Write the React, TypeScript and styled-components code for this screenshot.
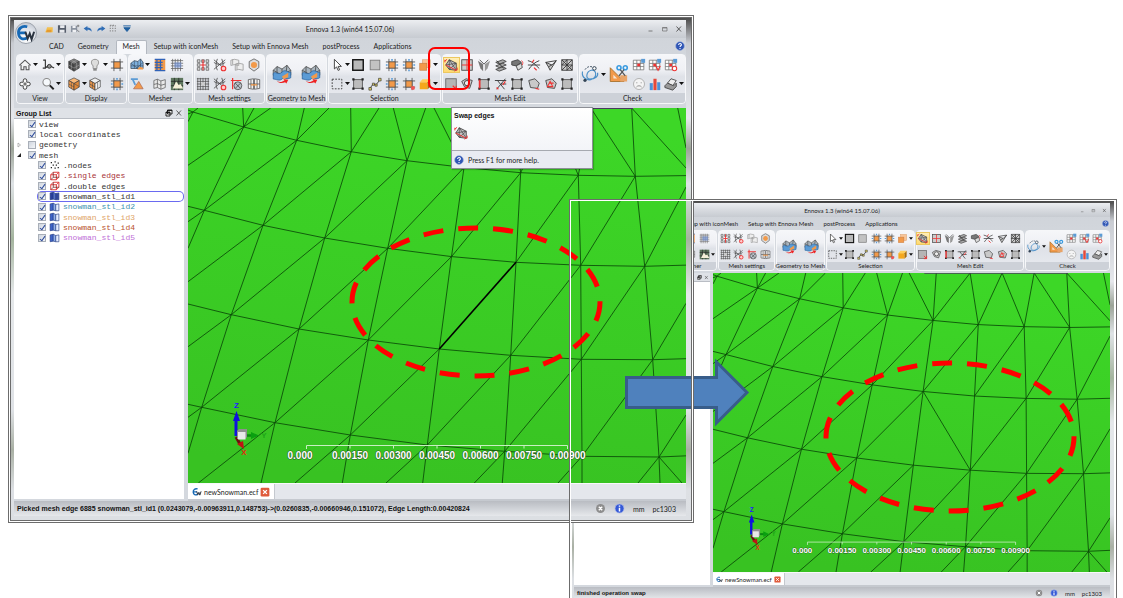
import React from 'react';
import styled, { createGlobalStyle, css, ThemeProvider } from 'styled-components';

interface Metrics {
  font: number;
  mono: number;
  titleH: number;
  tabsH: number;
  tabPad: number;
  tabsLeft: number;
  groupH: number;
  labelH: number;
  ribbonGap: number;
  icon: number;
  bigIcon: number;
  drop: number;
  col: number;
  wideCol: number;
  bigCol: number;
  panelW: number;
  splitter: number;
  headerH: number;
  viewH: number;
  docH: number;
  docPad: number;
  statusH: number;
  statusPad: number;
  orb: number;
  glass: string;
}

const full: Metrics = {
  font: 7, mono: 8, titleH: 18, tabsH: 16, tabPad: 7, tabsLeft: 28, groupH: 50, labelH: 10,
  ribbonGap: 4, icon: 14, bigIcon: 20, drop: 5, col: 16, wideCol: 21, bigCol: 26, panelW: 170, splitter: 4,
  headerH: 11, viewH: 375, docH: 18, docPad: 4, statusH: 15, statusPad: 10, orb: 22, glass: '2px 5px 4px 3px',
};

const compact: Metrics = {
  font: 6, mono: 6, titleH: 14, tabsH: 13, tabPad: 5, tabsLeft: 20, groupH: 41, labelH: 8,
  ribbonGap: 2, icon: 11, bigIcon: 15, drop: 4, col: 13, wideCol: 17, bigCol: 20, panelW: 136, splitter: 3,
  headerH: 9, viewH: 299, docH: 15, docPad: 3, statusH: 12, statusPad: 8, orb: 18, glass: '2px 4px 4px 2px',
};

declare module 'styled-components' {
  export interface DefaultTheme extends Metrics {}
}

const Global = createGlobalStyle`
  * { box-sizing: border-box; }
  body { margin: 0; background: #fff; overflow: hidden; font-family: Lato, "Liberation Sans", sans-serif; color: #1c1c1c; }
  button { font: inherit; color: inherit; padding: 0; margin: 0; border: 0; background: none; }
  svg { display: block; }
`;

/* ---------- stage ---------- */

const Stage = styled.main`
  position: relative;
  width: 100%;
  height: 100vh;
  overflow: hidden;
  background: #fff;
`;

const WindowBox = styled.section<{ $x: number; $y: number; $w: number }>`
  position: absolute;
  left: ${p => p.$x}px;
  top: ${p => p.$y}px;
  width: ${p => p.$w}px;
  padding: ${p => p.theme.glass};
  font-size: ${p => p.theme.font}px;
  line-height: ${p => p.theme.font + 3}px;
  white-space: nowrap;
  background:
    linear-gradient(90deg, #44444480, #3330 30%, #2228 60%, #5558) top / 100% 3px no-repeat,
    linear-gradient(180deg, #4a4a4a, #c9ccd2 5%, #e6e8ec 20%, #9ca498 26%, #dfe3e6 33%, #a4b49e 44%, #e5e8ea 55%, #dfe2e6 78%, #a9b0a4 86%, #dde0e4 94%, #dcdfe3);
`;

const Frame = styled.div<{ $x: number; $y: number; $w: number; $h: number; $double?: boolean }>`
  position: absolute;
  left: ${p => p.$x}px;
  top: ${p => p.$y}px;
  width: ${p => p.$w}px;
  height: ${p => p.$h}px;
  border: 1px solid #6c6c6c;
  box-shadow: inset 0 0 0 1px #fff ${p => (p.$double ? ', inset 0 0 0 2px #6c6c6c' : '')};
  pointer-events: none;
`;

const Highlight = styled.div`
  position: absolute;
  left: 428px;
  top: 47px;
  width: 42px;
  height: 43px;
  border: 2px solid #f00;
  border-radius: 7px;
`;

const Annotations = styled.svg`
  position: absolute;
  left: 0;
  top: 0;
  pointer-events: none;
`;

/* ---------- window chrome ---------- */

const Client = styled.div`
  display: flex;
  flex-direction: column;
  background: #d4d8de;
`;

const Chrome = styled.header`
  position: relative;
  background: linear-gradient(180deg, #dfe2e7, #c6cad0 16%, #d0d4da 40%, #d2d6dc);
`;

const TitleBar = styled.div`
  display: grid;
  grid-template-columns: 1fr auto 1fr;
  align-items: center;
  height: ${p => p.theme.titleH}px;
  background: linear-gradient(180deg, #eceef1, #d9dce1 45%, #c7cbd1);
`;

const QuickBar = styled.div`
  display: flex;
  align-items: center;
  padding-left: ${p => p.theme.tabsLeft}px;
  button { width: ${p => p.theme.col - 3}px; display: grid; place-items: center; }
  svg { width: ${p => p.theme.icon - 4}px; height: ${p => p.theme.icon - 4}px; }
`;

const Title = styled.h1`
  margin: 0;
  font-size: inherit;
  font-weight: 400;
`;

const WindowButtons = styled.div`
  display: flex;
  justify-content: flex-end;
  button { width: ${p => p.theme.col - 2}px; display: grid; place-items: center; }
  svg { width: ${p => p.theme.icon - 6}px; height: ${p => p.theme.icon - 6}px; }
`;

const Orb = styled.button`
  && {
    position: absolute;
    left: 1px;
    top: 2px;
    width: ${p => p.theme.orb}px;
    height: ${p => p.theme.orb}px;
    border: 1px solid #9ea4ad;
    border-radius: 50%;
    background: radial-gradient(circle at 50% 80%, #fff, #dfe3ea 55%, #b5bbc6);
    display: grid;
    place-items: center;
  }
  svg { width: ${p => p.theme.orb - 2}px; height: ${p => p.theme.orb - 2}px; }
`;

const Tabs = styled.nav`
  display: flex;
  align-items: stretch;
  height: ${p => p.theme.tabsH}px;
  padding-left: ${p => p.theme.tabsLeft}px;
  > :last-child { margin-left: auto; }
`;

const Tab = styled.button<{ $on?: boolean }>`
  && { padding: 0 ${p => p.theme.tabPad}px; }
  ${p => p.$on && css`
    && {
      margin-top: 2px;
      border: 1px solid #b3b8c0;
      border-bottom: 0;
      border-radius: 2px 2px 0 0;
      padding: 0 ${p.theme.tabPad - 1}px 3px;
      background: #f6f7fa;
    }
  `}
`;

const HelpButton = styled.button`
  && { padding-right: 1px; display: grid; place-items: center; }
  svg { width: ${p => p.theme.icon - 4}px; height: ${p => p.theme.icon - 4}px; }
`;

/* ---------- ribbon ---------- */

const Ribbon = styled.div`
  display: flex;
  gap: 1px;
  padding: 0 0 ${p => p.theme.ribbonGap}px 2px;
`;

const GroupBox = styled.section<{ $grow: number }>`
  flex: ${p => p.$grow} 1 0;
  min-width: 0;
  height: ${p => p.theme.groupH}px;
  display: flex;
  flex-direction: column;
  border: 1px solid #f6f7f9;
  border-radius: 4px;
  background: linear-gradient(180deg, #f5f6f9, #f0f1f5 30%, #dfe2e8 45%, #e9ebf0);
`;

const GroupLabel = styled.h2`
  display: flex;
  justify-content: center;
  margin: 0;
  height: ${p => p.theme.labelH}px;
  line-height: ${p => p.theme.labelH}px;
  font-size: inherit;
  font-weight: 400;
  border-radius: 0 0 3px 3px;
  background: #cdd1d8;
`;

const Tools = styled.div<{ $cols: string }>`
  flex: 1;
  display: grid;
  grid-template-rows: 1fr 1fr;
  grid-template-columns: ${p =>
    p.$cols.split('').map(c => (c === 'w' ? p.theme.wideCol : c === 'b' ? p.theme.bigCol : p.theme.col) + 'px').join(' ')};
  justify-content: space-evenly;
  align-items: center;
`;

const Tool = styled.button<{ $big?: boolean; $on?: boolean }>`
  && {
    display: flex;
    align-items: center;
    gap: 1px;
    ${p => p.$big && css`grid-row: 1 / span 2; justify-content: center;`}
    ${p => p.$on && css`background: linear-gradient(#ffefb8, #ffd970); box-shadow: 0 0 0 1px #ecc860; width: ${p.theme.icon + 1}px;`}
  }
  svg.glyph {
    flex: none;
    width: ${p => (p.$big ? p.theme.bigIcon : p.theme.icon)}px;
    height: ${p => (p.$big ? p.theme.bigIcon : p.theme.icon)}px;
  }
  svg.drop { flex: none; width: ${p => p.theme.drop}px; height: 3px; }
`;

/* ---------- body ---------- */

const Body = styled.div`
  display: flex;
`;

const SidePanel = styled.aside`
  width: ${p => p.theme.panelW}px;
  display: flex;
  flex-direction: column;
  padding-bottom: 2px;
`;

const PanelHeader = styled.div`
  display: flex;
  align-items: center;
  gap: 2px;
  height: ${p => p.theme.headerH}px;
  padding: 0 1px 0 2px;
  background: #dfe2e7;
  border-bottom: 1px solid #b9bdc4;
  h2 { margin: 0 auto 0 0; font: 700 ${p => p.theme.font}px "Liberation Sans", sans-serif; color: #111; }
  svg { width: ${p => p.theme.icon - 6}px; height: ${p => p.theme.icon - 6}px; }
`;

const PanelBody = styled.div`
  flex: 1;
  background: #fff;
`;

const Tree = styled.ul`
  display: grid;
  grid-template-rows: repeat(12, 1fr);
  height: 124px;
  margin: 0;
  padding: 0;
  list-style: none;
  font: ${p => p.theme.mono}px "Liberation Mono", monospace;
`;

const Row = styled.li<{ $level: number; $color?: string; $on?: boolean }>`
  display: flex;
  align-items: center;
  margin-left: ${p => (p.$level ? 23 : 2)}px;
  padding-left: ${p => (p.$level ? 1 : 0)}px;
  color: ${p => p.$color || '#333'};
  ${p => p.$on && css`box-shadow: inset 0 0 0 1px #6a6af0; border-radius: 5px;`}
  label { display: flex; align-items: center; gap: 3px; }
  label svg { width: 11px; height: 10px; }
`;

const Twist = styled.span`
  width: 12px;
  height: 6px;
  svg { width: 6px; height: 6px; }
`;

const Check = styled.input`
  appearance: none;
  position: relative;
  width: 8px;
  height: 8px;
  margin: 0;
  border: 1px solid #a9afb8;
  background: linear-gradient(135deg, #cfd5de, #f4f6f8);
  &:checked::after {
    content: '';
    position: absolute;
    left: 2px;
    top: 0;
    width: 2px;
    height: 5px;
    border: solid #2c4a9a;
    border-width: 0 1px 1px 0;
    transform: rotate(35deg);
  }
`;

const Content = styled.div`
  flex: 1;
  min-width: 0;
  margin-left: ${p => p.theme.splitter}px;
  background: #e4e7ec;
`;

const View = styled.svg`
  && { width: 100%; height: ${p => p.theme.viewH}px; }
`;

const DocBar = styled.div`
  display: flex;
  height: ${p => p.theme.docH}px;
  border-top: 1px solid #f8f9fa;
  border-bottom: 2px solid #c5c9cf;
`;

const DocTab = styled.div`
  display: flex;
  align-items: center;
  gap: 2px;
  padding: 0 ${p => p.theme.docPad}px;
  background: #fff;
  border-right: 1px solid #c4c8ce;
  svg { width: ${p => p.theme.icon - 4}px; height: ${p => p.theme.icon - 4}px; }
`;

const StatusBar = styled.footer`
  display: flex;
  align-items: center;
  gap: ${p => p.theme.font + 1}px;
  height: ${p => p.theme.statusH}px;
  padding: 0 ${p => p.theme.statusPad}px 0 3px;
  background: linear-gradient(180deg, #b9bcc2, #cfd2d7 50%, #e6e8eb);
  strong { margin-right: auto; font: 700 ${p => p.theme.font}px "Liberation Sans", sans-serif; color: #111; }
  svg { width: ${p => p.theme.icon - 3}px; height: ${p => p.theme.icon - 3}px; }
`;

const Tip = styled.div`
  position: absolute;
  left: 440px;
  top: 89px;
  width: 142px;
  height: 62px;
  display: flex;
  flex-direction: column;
  border: 1px solid #8c8f96;
  background: linear-gradient(180deg, #fff, #eef0f5);
  box-shadow: 1px 1px 1px #0003;
  strong { padding: 3px 2px; font: 700 7px/10px "Liberation Sans", sans-serif; color: #111; }
  > svg { width: 14px; height: 14px; margin: 2px 0 0 2px; }
  p {
    display: flex;
    align-items: center;
    gap: 4px;
    height: 18px;
    margin: auto 0 0;
    padding-left: 2px;
    border-top: 1px solid #a6a9b0;
    background: #e9ebf2;
  }
  p svg { width: 10px; height: 10px; }
`;

/* ---------- icons ---------- */

const K = '#444';
const O = '#f29a4a';
const B = '#5b9bd5';
const R = '#e33';

const hash = (fill: string, line: string) => (
  <>
    <path d="M1 4.5h14M1 11.5h14M4.5 1v14M11.5 1v14" stroke={line} />
    <rect x="4.5" y="4.5" width="7" height="7" fill={fill} stroke={K} strokeWidth=".7" />
  </>
);
const cube = (a: string, b: string, c: string) => (
  <>
    <path d="M8 1l6 3-6 3.500L2 4z" fill={a} stroke={K} strokeWidth=".8" />
    <path d="M2 4l6 3.500V15l-6-3.500z" fill={b} stroke={K} strokeWidth=".8" />
    <path d="M14 4L8 7.500V15l6-3.500z" fill={c} stroke={K} strokeWidth=".8" />
  </>
);
const tiles = (
  <path d="M1.500 2h3v3h-3zM6.500 2h3v3h-3zM11.500 2h3v3h-3zM1.500 6.500h3v3h-3zM11.500 6.500h3v3h-3zM1.500 11h3v3h-3zM6.500 11h3v3h-3zM11.500 11h3v3h-3z" fill="#ddd" stroke="#555" strokeWidth=".8" />
);
const smallGrid = (
  <>
    <path d="M1.500 2.500h12v11h-12zM1.500 6.200h12M1.500 9.800h12M5.500 2.500v11M9.500 2.500v11" fill="#fff" stroke="#777" strokeWidth=".9" />
    <rect x="6" y="6.500" width="3.200" height="3" fill={R} />
    <rect x="10.500" y="1" width="4.500" height="4.500" fill={B} />
  </>
);
const geoMesh = (
  <>
    <path d="M1 5l3-3 4 2 4-3 3 4v4l-4 2-3-2-4 2-3-2z" fill="#a9b4bd" stroke={K} strokeWidth=".6" />
    <path d="M8 4v5M4 2v6M12 1l-1 8M1 5l7 4 7-4" stroke={K} strokeWidth=".6" fill="none" />
    <path d="M1 7.500c2-2 4 2 7-1s5 1 7 0v4.500c-3 2-5-1-7 1s-5 0-7 0z" fill={B} stroke="#2a6099" strokeWidth=".6" />
    <path d="M8 10l5-3v3.500l-4 1.500z" fill={O} />
    <path d="M4 13.500c2 1.500 4 1 6-.5l-1-1 4 .5-1.500 3-1-1c-2 1-5 1-6.500-1z" fill="#e22" />
  </>
);
const tiltQuad = (
  <path d="M2 4l7-2 5 5-2 6-8-1z" fill="#c9c9c9" stroke={K} />
);
const corners = (
  <>
    <rect x="3" y="3" width="10" height="10" fill="#bcbcbc" stroke="#555" />
    <path d="M1.500 1.500h2.500v2.500h-2.500zM12 1.500h2.500v2.500H12zM1.500 12h2.500v2.500h-2.500zM12 12h2.500v2.500H12z" fill="#222" />
  </>
);

const glyphs: Record<string, React.ReactNode> = {
  home: <path d="M1.500 8.500L8 2.500l6.500 6M3.500 8v5.500h3.200V10h2.600v3.500h3.200V8" fill="#f4f4f4" stroke="#555" strokeWidth="1.200" />,
  axes: <><path d="M2.500 2.500h2.500v9H2M5 11l4-2M11 9.500l4 2" fill="none" stroke="#333" strokeWidth="1.300" /><circle cx="9.500" cy="9.500" r="2.200" fill="#999" stroke="#222" /></>,
  pan: <path d="M6 6V3.500C6 1.500 10 1.500 10 3.500V6h2.500c2 0 2 4 0 4H10v2.500c0 2-4 2-4 0V10H3.500c-2 0-2-4 0-4zM6 8h4M8 6v4" fill="#fafafa" stroke="#444" strokeWidth="1.100" />,
  zoom: <><circle cx="6.500" cy="6" r="4.300" fill="#f6f9fc" stroke="#888" strokeWidth="1.200" /><path d="M10 9.500l4.500 4.500" stroke="#222" strokeWidth="2.200" /></>,
  cubeDark: <>{cube('#777', '#444', '#5a5a5a')}<path d="M5 2.500l6 3.200M11 2.500L5 5.700M2 8l6 3.500L14 8M5 5.700V13M11 5.700V13" stroke="#aaa" strokeWidth=".6" fill="none" /></>,
  bulb: <><path d="M8 1.500c-5 0-5 5-2.200 7.500V12h4.400V9C13 6.500 13 1.500 8 1.500z" fill="#ddd" stroke="#888" /><path d="M6 12.500h4v2H6z" fill="#888" /></>,
  hash: hash(O, '#555'),
  cubeOrange: <>{cube('#f8b878', O, '#e08838')}<path d="M5 5.700v7.500M2 8l6 3.500M8 7.500l6 3.500" stroke={K} strokeWidth=".6" fill="none" /></>,
  cubeOpen: <>{cube('#eee', O, '#f4f4f4')}<path d="M5 5.700V13M2 8l6 3.500M11 6v7" stroke={K} strokeWidth=".7" fill="none" /></>,
  hashBlue: <>{hash(O, '#555')}<path d="M8 1v2M8 13v2M1 8h2M13 8h2" stroke={B} strokeWidth="1.800" /></>,
  meshCar: <><path d="M1 6l4-3 4 1 3-3 3 4v7H1z" fill="#7fb0dc" stroke="#345" strokeWidth=".8" /><path d="M1 9h14M5 3v9M9 4v8M12 1v11M1 6l8 6M15 5l-8 7" stroke="#345" strokeWidth=".6" fill="none" /><path d="M8 13l3-3 4 1v2z" fill={O} /></>,
  blueOrange: <><rect x="2" y="1.500" width="12" height="13" fill={O} /><path d="M2 1.500h12M2 5h9M2 8h9M2 11h9M2 14.500h12M4.500 1.500v13M8.500 1.500v13" stroke="#2f62b8" strokeWidth="1.400" /></>,
  plaid: <><path d="M1 3h14M1 6h14M1 9h14M1 12h14M3 1v14M6 1v14M9 1v14M12 1v14" stroke="#666" strokeWidth=".9" /><rect x="5" y="5" width="8" height="6" fill="#6f92dc99" /></>,
  letterT: <><path d="M1 2.500h8M3 2.500L6 9" stroke={B} strokeWidth="2" /><path d="M4 13.500L10 5l5 8.500z" fill={O} stroke="#a65" strokeWidth=".8" /></>,
  flagMesh: <path d="M1 4l4-1.500 4 2L14 3v9l-5 2-4-2-4 1zM5 2.500V12M9 4.500V14M1 8.500l4-1 4 2 5-1.500" fill="#e8e8e8" stroke="#555" strokeWidth=".8" />,
  terrain: <><rect x="1" y="1" width="14" height="14" fill="#5d765d" /><path d="M1 5h14M1 10h14M5 1v14M10 1v14" stroke="#222" strokeWidth=".8" /><path d="M3 13l4-8 3 4 2-1 3 5z" fill="#f4f0d8" /></>,
  tilesRed: <>{tiles}<path d="M8 2v12M5 8h6" stroke={R} strokeWidth="1.300" /></>,
  netRed: <><path d="M1 2l13 11M1 13L14 2M1 5c4 3 9 3 13 0M5 1c-2 5-2 9 0 13M10 1c2 5 2 9 0 13" stroke="#444" strokeWidth=".9" fill="none" /><circle cx="12" cy="12" r="2.600" fill="#fcc" stroke={R} strokeWidth="1.300" /></>,
  sheets: <path d="M1 2.500l4-1 5 1v6l-5-1-4 1zM6 7l4-1 5 1v7l-5-1-4 1zM3 1.500v6M8 6v7" fill="#eee" stroke="#999" strokeWidth=".9" />,
  orangeHex: <><path d="M8 1l5.500 3v7L8 15l-5.500-4V4z" fill="#ddd" stroke="#666" /><circle cx="8" cy="8" r="3.500" fill={O} /></>,
  tilesDark: <><path d="M1 2h14M1 5h14M1 8h14M1 11h14M1 14h14M2 1v14M5 1v14M8 1v14M11 1v14M14 1v14" stroke="#555" strokeWidth=".9" /><path d="M6 6h4v4H6z" fill="#ccc" /></>,
  redTarget: <><path d="M3 1v13M1 4h12" stroke={R} strokeWidth="1.400" /><circle cx="9" cy="10" r="4.500" fill="#bcc4cc" stroke="#555" /><path d="M6 7l6 6M6 13l6-6" stroke="#333" strokeWidth=".8" /></>,
  doors: <><path d="M1.500 3l6-1v12l-6-1zM8.500 2l6 1v10l-6 1zM1.500 8h13M4.500 3v10M11.500 3v10" fill="#f2f2f2" stroke="#555" strokeWidth=".9" /><path d="M4.500 9h7" stroke={O} strokeWidth="1.500" /></>,
  geo: geoMesh,
  cursor: <path d="M5 1.500v11l2.500-2.300 1.800 4 1.700-.8-1.700-3.800H13z" fill="#fff" stroke="#444" strokeWidth="1.100" />,
  boxBold: <rect x="2" y="2" width="12" height="12" fill="#b9b9b9" stroke="#111" strokeWidth="1.600" />,
  box: <rect x="2.500" y="2.500" width="11" height="11" fill="#c2c2c2" stroke="#777" />,
  hashDot: <>{hash(O, '#555')}<path d="M8 1v2M8 13v2M1 8h2M13 8h2" stroke={B} strokeWidth="1.800" /></>,
  hashDotRed: <>{hash(O, '#555')}<circle cx="12.500" cy="12.500" r="2.300" fill="#e55" /></>,
  stackOrange: <><rect x="5" y="2" width="9" height="9" fill="#f8c598" stroke="#d9a070" strokeWidth=".7" /><rect x="2" y="6" width="8" height="8" fill={O} stroke="#c87a40" strokeWidth=".7" /></>,
  dashBox: <><rect x="2.500" y="2.500" width="11" height="11" fill="none" stroke="#333" strokeDasharray="2 1.500" /></>,
  corners,
  node: <><path d="M2 13l4-5 3 1 5-6" fill="none" stroke="#333" /><path d="M1 12h3v3H1zM5 7h2.500v2.500H5zM8 8h2.500v2.500H8zM12 1.500h3v3h-3z" fill="#d8c860" stroke="#333" strokeWidth=".7" /></>,
  cubeYellow: <><path d="M2 6h9v8H2z" fill="#f5a81c" /><path d="M2 6l3-3.500h9L11 6z" fill="#ffce5a" /><path d="M11 6l3-3.500V11l-3 3z" fill="#a86d0c" /></>,
  swap: <><path d="M2 8l4-6 8 4 0 8-8-1z" fill="#c4c4c4" stroke={K} /><path d="M2 8l12-2M6 2v11M6 13l8-7M6 2l8 12" stroke={K} strokeWidth=".8" /><path d="M1 3.500l2.500-2M1 2v3M12 15l2.500-1.500M15 11v3M2 8l12 6" stroke={R} strokeWidth="1.100" fill="none" /></>,
  split: <><rect x="2" y="2" width="12" height="12" fill="#ccc" stroke={K} /><path d="M2 8h12M8 2v12" stroke={R} strokeWidth="1.100" /></>,
  valley: <><path d="M1 3l6 4v8l-3-3z" fill="#777" /><path d="M15 3L9 7v8l3-3z" fill="#999" /><path d="M3 2l5 5 5-5" fill="none" stroke={K} /></>,
  layers: <><path d="M2 5l8-3 4 2-8 3zM2 9l8-3 4 2-8 3zM2 13l8-3 4 2-8 3z" fill="#aaa" stroke={K} /><path d="M3 3l8 9" stroke="#333" /></>,
  fold: <><path d="M2 4l7-2 4 3-6 4-5-1z" fill="#777" stroke={K} /><path d="M7 9l6-3 1 5-5 3z" fill="#ddd" stroke={K} /><path d="M13 3c2 1 2 3 1 5" stroke={R} fill="none" /></>,
  cross: <><path d="M1 3c5 1 8 4 13 9M2 13c3-5 7-8 12-10M1 8h14" stroke="#333" fill="none" /><path d="M6 5l2-3M8 11l3 3" stroke={R} strokeWidth="1.400" /></>,
  wedge: <path d="M2 5l12-2-7 11-2-4zM2 5l7 3 5-5M5 10l4-2" fill="#ccc" stroke="#333" />,
  triGrid: <path d="M2 2h12v12H2zM8 2v12M2 8h12M2 8l6-6M2 14L14 2M8 14l6-6M2 2l12 12" fill="#ccc" stroke="#333" />,
  boxRed: <><rect x="2" y="2" width="12" height="12" fill="#b5b5b5" stroke="#666" /><path d="M10 10l4 4M14 10v4h-4" stroke={R} strokeWidth="1.300" fill="none" /></>,
  spin: <><path d="M2 5l5-3 7 2-3 9-6-2z" fill="#ccc" stroke={K} /><circle cx="8" cy="7" r="3" fill="#eee" stroke="#333" /></>,
  redSide: <>{corners}<path d="M3 3v10" stroke={R} strokeWidth="2" /></>,
  cross2: <><path d="M1 4h13M3 14L13 2M4 4l8 10M8 8h6" stroke="#333" /><path d="M10 9l3-4M3 12l2 2" stroke={R} strokeWidth="1.400" /></>,
  tilt: <>{tiltQuad}<path d="M10 13l4 1" stroke={R} strokeWidth="1.400" /></>,
  tiltRed: <>{tiltQuad}<path d="M4 11l3-6 3 6zM6 7h5" stroke={R} strokeWidth="1.200" fill="none" /></>,
  path: <><path d="M2 6c-1 5 4 8 8 6s3-8-1-7-5 7-1 7 7-2 6-5" fill="none" stroke="#4a90c8" strokeWidth=".9" /><path d="M4 4.500C6 1.500 9 1.500 11 3" fill="none" stroke="#456" strokeWidth=".8" strokeDasharray="1.500 1" /><circle cx="4" cy="13" r="1.300" fill="#345" /><circle cx="11.500" cy="3.500" r="1.400" fill="#fff" stroke="#345" strokeWidth=".8" /></>,
  measure: <><path d="M1 3v11h11z" fill={O} stroke="#a5702c" strokeWidth=".7" /><path d="M3.500 8.500v3h3z" fill="#f4e6d6" /><rect x="9" y="9" width="5.500" height="5" fill="#e8a468" /><circle cx="8" cy="3" r="1.600" fill="none" stroke="#3a9be0" strokeWidth="1.300" /><circle cx="13" cy="3" r="1.600" fill="none" stroke="#3a9be0" strokeWidth="1.300" /><path d="M9 4.500l4 5M12 4.500l-4 5" stroke="#555" /></>,
  gridPlain: smallGrid,
  gridV: <>{smallGrid}<path d="M9 9l2.500 5L14 9" fill="none" stroke={R} strokeWidth="1.300" /></>,
  gridO: <>{smallGrid}<circle cx="12" cy="12" r="2.500" fill="#fff" stroke={R} strokeWidth="1.200" /></>,
  sad: <><circle cx="8" cy="8" r="6.300" fill="#f4f4f4" stroke="#aaa" /><path d="M5 11.500c1.500-2 4.500-2 6 0M5.500 6v1.200M10.500 6v1.200" fill="none" stroke="#888" /></>,
  bars: <><path d="M2 7h3.500v8H2z" fill="#4a90d8" /><path d="M6.200 2h3.600v13H6.200z" fill="#e4483a" /><path d="M10.500 6H14v9h-3.500z" fill="#4a90d8" /></>,
  scanner: <><path d="M4 7l4-5 6 2-4 6z" fill="#eee" stroke={K} /><path d="M1 10l3-3 7 3 3-3v4l-4 4-9-3z" fill="#999" stroke={K} /></>,
  folder: <><path d="M2 13L5 5h9v8z" fill="#f3c04f" /><path d="M5 9h7v4H3z" fill="#e59a2e" /></>,
  save: <><path d="M1.500 2h13v12h-13z" fill="#555d6b" /><path d="M5 2h7v4.500H5zM4 9h8v5H4z" fill="#e8eaee" /></>,
  saveAs: <><path d="M1.500 3h10v10h-10z" fill="#8b93a0" /><path d="M4 3h5v3.500H4zM4 9h6v4H4z" fill="#f0f1f4" /><path d="M11 9l4 4M13 1v4M11 3h4" stroke="#555" /></>,
  undo: <path d="M1 7l6-4v2.500c4 0 7 2 7 7-2-3-4-3.500-7-3.500v2.500z" fill="#2f6db5" />,
  redo: <path d="M15 7L9 3v2.500c-4 0-7 2-7 7 2-3 4-3.500 7-3.500v2.500z" fill="#2f6db5" />,
  dashes: <path d="M2 2v12M6 2v12M10 2v12M2 2h8" stroke="#777" strokeDasharray="2 2" strokeWidth="1.500" />,
  more: <path d="M2 3h12M3 6h10L8 12z" fill="#1f5f9f" stroke="#1f5f9f" strokeWidth="1.500" />,
  min: <path d="M3 12h8" stroke="#666" strokeWidth="1.600" />,
  max: <path d="M3 5h9v7H3zM3 6h9" fill="none" stroke="#666" strokeWidth="1.300" />,
  close: <path d="M3 3l9 10M12 3L3 13" stroke="#444" strokeWidth="1.700" />,
  float: <path d="M5 2h9v8H5zM2 6h8v8H2zM5 3h9M2 7h8" fill="#eee" stroke="#111" strokeWidth="1.800" />,
  help: <><circle cx="8" cy="8" r="7" fill="#2f55b5" stroke="#9fb2dc" /><path d="M5.800 6.200c0-3 4.700-2.700 4.400 0-.2 1.500-2.200 1.500-2.200 3.300M8 11.200v1.600" fill="none" stroke="#fff" strokeWidth="1.700" /></>,
  info: <><circle cx="8" cy="8" r="6.500" fill="#3559d6" stroke="#aab8ea" /><path d="M8 3.500v2M8 7v5.500" stroke="#fff" strokeWidth="2.200" /></>,
  stop: <><circle cx="8" cy="8" r="6.500" fill="#8d8d8d" /><path d="M5.500 5.500l5 5M10.500 5.500l-5 5" stroke="#fff" strokeWidth="2" /></>,
  tabClose: <><rect x="1" y="1" width="14" height="14" rx="2" fill="#df5b3c" /><path d="M5 5l6 6M11 5l-6 6" stroke="#fff" strokeWidth="2.200" /></>,
  logo: <><path d="M9 3C4.500 2 1.500 4.500 2 8.500s3.500 5 7 3.500M2.500 7.800h5.500" fill="none" stroke="#1769b5" strokeWidth="2.200" /><path d="M7.500 7l1.800 5.500L11 8.500l1.500 4.500L14.500 7" fill="none" stroke="#2b3440" strokeWidth="1.600" /></>,
  nodes: <path d="M2 3h2v2H2zM8 2h2v2H8zM13 4h2v2h-2zM5 7h2v2H5zM10 7h2v2h-2zM2 11h2v2H2zM8 12h2v2H8zM13 11h2v2h-2z" fill="#222" />,
  edges: <><path d="M2 6h9v8H2zM2 6l4-4h9l-4 4M15 2v8l-4 4" fill="none" stroke="#d33" strokeWidth="1.500" /><path d="M6 2v8l-4 4M6 10h9" stroke="#622" strokeWidth="1.200" fill="none" /></>,
  part: <><path d="M1 3l5-1v11l-5 1z" fill="#3d63c9" stroke="#223a80" /><path d="M6 2l4 2v10l-4-1z" fill="#8fb0ee" stroke="#223a80" /><path d="M10 4l5-1v11h-5z" fill="#e6eeff" stroke="#223a80" /></>,
  partDark: <><path d="M1 3l5-1v11l-5 1z" fill="#2a3f9c" stroke="#223a80" /><path d="M6 2l4 2v10l-4-1z" fill="#5570c8" stroke="#223a80" /><path d="M10 4l5-1v11h-5z" fill="#34489c" stroke="#223a80" /></>,
};

const Icon = ({ name }: { name: string }) => (
  <svg className="glyph" viewBox="0 0 16 16" fill="none" aria-hidden="true">{glyphs[name]}</svg>
);

/* ---------- ribbon data ---------- */

interface ToolSpec { icon: string; label: string; drop?: boolean; big?: boolean; on?: boolean }
interface GroupSpec { name: string; grow: number; cols: string; tools: ToolSpec[] }

const t = (icon: string, label: string, flags = ''): ToolSpec => ({
  icon, label, drop: flags.includes('d'), big: flags.includes('b'), on: flags.includes('o'),
});

const groups: GroupSpec[] = [
  { name: 'View', grow: 46, cols: 'ww', tools: [t('home', 'Home', 'd'), t('axes', 'Axes', 'd'), t('pan', 'Pan'), t('zoom', 'Zoom', 'd')] },
  { name: 'Display', grow: 60, cols: 'wwn', tools: [t('cubeDark', 'Shading', 'd'), t('bulb', 'Light', 'd'), t('hash', 'Grid'), t('cubeOrange', 'Solid', 'd'), t('cubeOpen', 'Faces'), t('hashBlue', 'Grid lines')] },
  { name: 'Mesher', grow: 63, cols: 'wnw', tools: [t('meshCar', 'Surface mesh', 'd'), t('blueOrange', 'Volume mesh'), t('plaid', 'Overlay'), t('letterT', 'Triangles'), t('flagMesh', 'Sheet'), t('terrain', 'Terrain', 'd')] },
  { name: 'Mesh settings', grow: 69, cols: 'nnnn', tools: [t('tilesRed', 'Sizes'), t('netRed', 'Remove net'), t('sheets', 'Sheets'), t('orangeHex', 'Hex'), t('tilesDark', 'Density'), t('netRed', 'Net'), t('redTarget', 'Origin'), t('doors', 'Periodic')] },
  { name: 'Geometry to Mesh', grow: 59, cols: 'bb', tools: [t('geo', 'To mesh', 'b'), t('geo', 'To geometry', 'b')] },
  { name: 'Selection', grow: 111, cols: 'wnnnnw', tools: [t('cursor', 'Pick', 'd'), t('boxBold', 'Face and edges'), t('box', 'Face'), t('hashDot', 'Grow'), t('hashDot', 'Connected'), t('stackOrange', 'Layers', 'd'), t('dashBox', 'Box pick', 'd'), t('corners', 'Vertices'), t('node', 'Nodes'), t('hashDot', 'Loop'), t('hashDotRed', 'Deselect'), t('cubeYellow', 'Volume', 'd')] },
  { name: 'Mesh Edit', grow: 134, cols: 'nnnnnnnn', tools: [t('swap', 'Swap edges', 'o'), t('split', 'Split'), t('valley', 'Valley'), t('layers', 'Layers'), t('fold', 'Fold'), t('cross', 'Intersect'), t('wedge', 'Wedge'), t('triGrid', 'Refine'), t('boxRed', 'Move'), t('spin', 'Rotate'), t('redSide', 'Align'), t('cross2', 'Cut'), t('corners', 'Fill'), t('tilt', 'Tilt'), t('tiltRed', 'Mark'), t('corners', 'Corners')] },
  { name: 'Check', grow: 105, cols: 'bbnnw', tools: [t('path', 'Trace', 'bd'), t('measure', 'Measure', 'b'), t('gridPlain', 'Quality'), t('gridV', 'Volume'), t('gridO', 'Orthogonality'), t('sad', 'Problems'), t('bars', 'Histogram'), t('scanner', 'Section', 'd')] },
];

const tabNames = ['CAD', 'Geometry', 'Mesh', 'Setup with iconMesh', 'Setup with Ennova Mesh', 'postProcess', 'Applications'];
const quick = ['folder', 'save', 'saveAs', 'undo', 'redo', 'dashes', 'more'];

interface Node { name: string; level: number; icon?: string; color?: string; on?: boolean; off?: boolean; twist?: 'open' | 'closed' }
const nodes: Node[] = [
  { name: 'view', level: 0 },
  { name: 'local coordinates', level: 0 },
  { name: 'geometry', level: 0, off: true, twist: 'closed' },
  { name: 'mesh', level: 0, twist: 'open' },
  { name: '.nodes', level: 1, icon: 'nodes' },
  { name: '.single edges', level: 1, icon: 'edges', color: '#a83238' },
  { name: '.double edges', level: 1, icon: 'edges' },
  { name: 'snowman_stl_id1', level: 1, icon: 'partDark', on: true },
  { name: 'snowman_stl_id2', level: 1, icon: 'part', color: '#3c93b0' },
  { name: 'snowman_stl_id3', level: 1, icon: 'part', color: '#e0a468' },
  { name: 'snowman_stl_id4', level: 1, icon: 'part', color: '#b8502c' },
  { name: 'snowman_stl_id5', level: 1, icon: 'part', color: '#c070d8' },
];

/* ---------- mesh ---------- */

type P = [number, number];
const row0: P[] = [[5, 4], [55.7, 19], [108.7, 32.3], [163.3, 43.7], [219, 52.7], [276, 59.5], [332.7, 64.7], [390.3, 67.3], [447.3, 68.3], [505, 67.5]];
const row1: P[] = [[16.3, 102.3], [75, 117.3], [136.7, 130], [199.7, 140.3], [263.5, 148.6], [328, 154.3], [392.7, 157.3], [456.7, 158.3], [520, 156.5]];
const row2: P[] = [[43.3, 206.7], [111, 221], [180.3, 232], [251.3, 241], [322.7, 247.3], [393.3, 251.3], [464.7, 251.7], [536, 249.5]];
const row3: P[] = [[13.7, 299.3], [87, 314.7], [162.3, 327], [239.3, 337], [316.7, 343.3], [394, 348.3], [471, 349], [540, 346]];

const rim: [number, number, number, number][] = [
  [0, 2, 5, 4], [5, 4, 10, 0], [5, 4, 0, 13.7], [5, 4, 0, 6],
  [55.7, 19, 54.7, 0], [55.7, 19, 66, 0], [55.7, 19, 82.7, 0], [55.7, 19, 0, 57.3],
  [108.7, 32.3, 116.3, 0], [108.7, 32.3, 141, 0], [163.3, 43.7, 162.7, 0], [163.3, 43.7, 191, 0],
  [219, 52.7, 205.3, 0], [219, 52.7, 237.7, 0], [276, 59.5, 246, 0], [276, 59.5, 280, 0], [276, 59.5, 322.5, 0],
  [332.7, 64.7, 322.5, 0], [332.7, 64.7, 362.6, 0], [390.3, 67.3, 362.6, 0], [390.3, 67.3, 402.8, 0],
  [447.3, 68.3, 402.8, 0], [447.3, 68.3, 443.7, 0], [443.7, 0, 498, 60], [489.7, 0, 498, 40],
  [0, 98.3, 16.3, 102.3], [16.3, 102.3, 0, 113.7], [16.3, 102.3, 0, 140.3], [75, 117.3, 0, 173.7],
  [456.7, 158.3, 498, 79], [464.7, 251.7, 498, 195.3], [471, 349, 498, 307],
  [0, 196, 43.3, 206.7], [43.3, 206.7, 0, 238.7], [0, 296.3, 13.7, 299.3], [13.7, 299.3, 0, 309.3], [13.7, 299.3, 0, 345.3],
  [87, 314.7, 73, 375], [87, 314.7, 10.3, 375], [162.3, 327, 154.3, 375], [162.3, 327, 107, 375],
  [239.3, 337, 234.7, 375], [239.3, 337, 198, 375], [316.7, 343.3, 314.3, 375], [316.7, 343.3, 286.3, 375],
  [394, 348.3, 394, 375], [394, 348.3, 370, 375], [471, 349, 472, 375], [471, 349, 450, 375], [471, 349, 494, 375],
];

const seg = (a: P, b: P) => `M${a[0]} ${a[1]}L${b[0]} ${b[1]}`;

function meshPath() {
  const out: string[] = rim.map(([a, b, c, d]) => `M${a} ${b}L${c} ${d}`);
  [row0, row1, row2, row3].forEach(r => r.slice(1).forEach((p, i) => out.push(seg(r[i], p))));
  for (let i = 0; i < 8; i++) {
    out.push(seg(row0[i + 1], row1[i]));
    if (i < 7) out.push(seg(row0[i + 2], row1[i]));
  }
  for (let i = 0; i < 7; i++) {
    out.push(seg(row1[i + 1], row2[i]));
    if (i < 6 && i !== 3) out.push(seg(row1[i + 2], row2[i]));
    out.push(seg(row2[i], row3[i]));
    if (i < 6) out.push(seg(row2[i + 1], row3[i]));
  }
  return out.join('');
}
const meshD = meshPath();
const ticks = ['0.000', '0.00150', '0.00300', '0.00450', '0.00600', '0.00750', '0.00900'];

function MeshView({ id, swapped }: { id: string; swapped: boolean }) {
  return (
    <View viewBox="0 0 498 375" preserveAspectRatio="xMinYMin slice" role="img" aria-label="Mesh view">
      <defs>
        <linearGradient id={id} x1="0.6" y1="0" x2="0.4" y2="1">
          <stop offset="0" stopColor="#3dd727" />
          <stop offset="1" stopColor="#38c222" />
        </linearGradient>
      </defs>
      <rect width="498" height="375" fill={`url(#${id})`} />
      <path d={meshD} stroke="#0b4a08" strokeOpacity=".85" strokeWidth="1" vectorEffect="non-scaling-stroke" fill="none" />
      {swapped ? (
        <path d={seg(row1[4], row2[4])} stroke="#0b4a08" strokeOpacity=".85" vectorEffect="non-scaling-stroke" />
      ) : (
        <path d={seg(row1[5], row2[3])} stroke="#000" strokeWidth="1.600" />
      )}
      <path d="M265 0.500h180" stroke="#4a3a60" />
      <path d="M118.500 341V337.500H379.500V341M162 337.500v3M205.500 337.500v3M249 337.500v3M292.500 337.500v3M336 337.500v3" stroke="#c9efc2" fill="none" />
      <g fontFamily="Liberation Sans, sans-serif" fontSize="10" fontWeight="700" fill="#fff" textAnchor="middle" stroke="#2b5a24" strokeWidth="1" style={{ paintOrder: 'stroke' }}>
        {ticks.map((s, i) => <text key={s} x={i ? 118.5 + i * 43.5 : 112} y="351">{s}</text>)}
      </g>
      <path d="M48 328V310" stroke="#1010e0" strokeWidth="3" />
      <path d="M45 313l3.500-10 3.500 10z" fill="#1010e0" />
      <path d="M48 329l4 7" stroke="#6a1010" strokeWidth="3" />
      <path d="M49 336l6-3 1 8z" fill="#c01414" />
      <path d="M57 327.500h8" stroke="#0a8a10" strokeWidth="2.500" />
      <path d="M63 324l8 3.500-8 3.500z" fill="#0aa010" />
      <path d="M49 323l2-2h8v8l-2 2h-8z" fill="#8f8f8f" />
      <rect x="50" y="324" width="7.500" height="7.500" fill="#e9e9e9" />
      <g fontFamily="Liberation Sans, sans-serif" fontSize="8" fontWeight="700" textAnchor="middle">
        <text x="48.500" y="300" fill="#2020ff">Z</text>
        <text x="56" y="347" fill="#e02a10">X</text>
        <text x="76" y="330" fill="#1ea818">Y</text>
      </g>
    </View>
  );
}

/* ---------- window ---------- */

interface AppWindowProps { id: string; x: number; y: number; w: number; status: string; items: Node[]; swapped?: boolean; children?: React.ReactNode }

function AppWindow({ id, x, y, w, status, items, swapped = false, children }: AppWindowProps) {
  return (
    <WindowBox $x={x} $y={y} $w={w} aria-label="Ennova">
      <Client>
        <Chrome>
          <TitleBar>
            <QuickBar>{quick.map(q => <button key={q} aria-label={q}><Icon name={q} /></button>)}</QuickBar>
            <Title>Ennova 1.3 (win64 15.07.06)</Title>
            <WindowButtons>
              {['min', 'max', 'close'].map(b => <button key={b} aria-label={b}><Icon name={b} /></button>)}
            </WindowButtons>
          </TitleBar>
          <Tabs>
            {tabNames.map(n => <Tab key={n} $on={n === 'Mesh'}>{n}</Tab>)}
            <HelpButton aria-label="Help"><Icon name="help" /></HelpButton>
          </Tabs>
          <Orb aria-label="Application menu"><Icon name="logo" /></Orb>
        </Chrome>
        <Ribbon>
          {groups.map(g => (
            <GroupBox key={g.name} $grow={g.grow}>
              <Tools $cols={g.cols}>
                {g.tools.map(tool => (
                  <Tool key={tool.label} $big={tool.big} $on={tool.on} aria-label={tool.label}>
                    <Icon name={tool.icon} />
                    {tool.drop && <svg className="drop" viewBox="0 0 5 3" aria-hidden="true"><path d="M0 0h5L2.500 3z" fill="#111" /></svg>}
                  </Tool>
                ))}
              </Tools>
              <GroupLabel>{g.name}</GroupLabel>
            </GroupBox>
          ))}
        </Ribbon>
        <Body>
          <SidePanel>
            <PanelHeader>
              <h2>Group List</h2>
              <button aria-label="Float"><Icon name="float" /></button>
              <button aria-label="Close panel"><Icon name="close" /></button>
            </PanelHeader>
            <PanelBody>
              {items.length > 0 && (
                <Tree>
                  {items.map(n => (
                    <Row key={n.name} $level={n.level} $color={n.color} $on={n.on}>
                      {n.level === 0 && (
                        <Twist>
                          {n.twist && (
                            <svg viewBox="0 0 6 6" aria-hidden="true">
                              {n.twist === 'open' ? <path d="M5 1v4H1z" fill="#222" /> : <path d="M2 1l2.500 2L2 5z" fill="#fff" stroke="#999" strokeWidth=".7" />}
                            </svg>
                          )}
                        </Twist>
                      )}
                      <label>
                        <Check type="checkbox" defaultChecked={!n.off} />
                        {n.icon && <Icon name={n.icon} />}
                        {n.name}
                      </label>
                    </Row>
                  ))}
                </Tree>
              )}
            </PanelBody>
          </SidePanel>
          <Content>
            <MeshView id={id} swapped={swapped} />
            <DocBar>
              <DocTab>
                <Icon name="logo" />
                newSnowman.ecf
                <button aria-label="Close document"><Icon name="tabClose" /></button>
              </DocTab>
            </DocBar>
          </Content>
        </Body>
        <StatusBar>
          <strong>{status}</strong>
          <Icon name="stop" />
          <Icon name="info" />
          <span>mm</span>
          <span>pc1303</span>
        </StatusBar>
      </Client>
      {children}
    </WindowBox>
  );
}

const ellipse = (cx: number, cy: number) =>
  `M${cx - 124} ${cy}A124 74 0 0 1 ${cx + 124} ${cy}A124 74 0 0 1 ${cx - 124} ${cy}`;

export default function App() {
  return (
    <>
      <Global />
      <Stage>
        <ThemeProvider theme={compact}>
          <AppWindow id="skin-b" x={572} y={201} w={542} status="finished operation swap" items={[]} swapped />
        </ThemeProvider>
        <ThemeProvider theme={full}>
          <AppWindow
            id="skin-a"
            x={11}
            y={18}
            w={680}
            status="Picked mesh edge 6885 snowman_stl_id1 (0.0243079,-0.00963911,0.148753)->(0.0260835,-0.00660946,0.151072), Edge Length:0.00420824"
            items={nodes}
          >
            <Tip role="tooltip">
              <strong>Swap edges</strong>
              <Icon name="swap" />
              <p><Icon name="help" />Press F1 for more help.</p>
            </Tip>
          </AppWindow>
        </ThemeProvider>
        <Annotations width="1123" height="598" fill="none" aria-hidden="true">
          <path d={ellipse(476, 302)} stroke="#f00" strokeWidth="5" strokeDasharray="20 15" />
          <path d={ellipse(950, 437)} stroke="#f00" strokeWidth="5" strokeDasharray="20 15" />
          <path d="M626.500 377.500H716.500V362L747 392.500L716.500 423V407.500H626.500Z" fill="#4f81bd" stroke="#385d8a" strokeWidth="3" />
        </Annotations>
        <Highlight />
        <Frame $x={8} $y={15} $w={686} $h={508} $double />
        <Frame $x={569} $y={199} $w={548} $h={420} />
      </Stage>
    </>
  );
}
